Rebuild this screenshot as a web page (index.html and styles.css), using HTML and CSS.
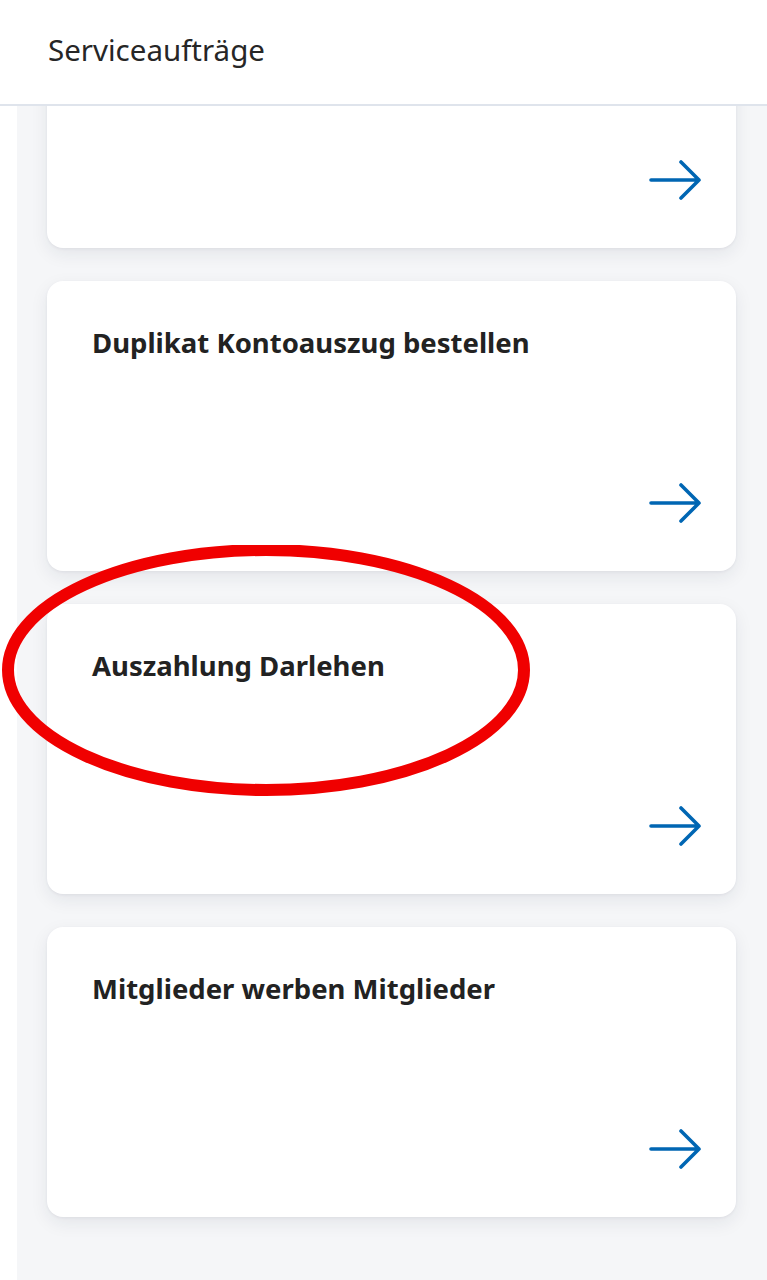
FILE: index.html
```
<!DOCTYPE html>
<html lang="de">
<head>
<meta charset="utf-8">
<link rel="stylesheet" href="styles.css">
</head>
<body>
<header class="top">
  <h1 class="top-title">Serviceaufträge</h1>
</header>
<div class="page">
  <main class="list">
    <a class="card card-first">
      <span class="card-title"></span>
      <svg class="arrow" viewBox="0 0 52 40"><path d="M2 20 H50 M32 2 L50 20 L32 38" fill="none" stroke="#0066b3" stroke-width="3.6" stroke-linecap="round" stroke-linejoin="round"/></svg>
    </a>
    <a class="card">
      <span class="card-title">Duplikat Kontoauszug bestellen</span>
      <svg class="arrow" viewBox="0 0 52 40"><path d="M2 20 H50 M32 2 L50 20 L32 38" fill="none" stroke="#0066b3" stroke-width="3.6" stroke-linecap="round" stroke-linejoin="round"/></svg>
    </a>
    <a class="card">
      <span class="card-title">Auszahlung Darlehen</span>
      <svg class="arrow" viewBox="0 0 52 40"><path d="M2 20 H50 M32 2 L50 20 L32 38" fill="none" stroke="#0066b3" stroke-width="3.6" stroke-linecap="round" stroke-linejoin="round"/></svg>
    </a>
    <a class="card">
      <span class="card-title">Mitglieder werben Mitglieder</span>
      <svg class="arrow" viewBox="0 0 52 40"><path d="M2 20 H50 M32 2 L50 20 L32 38" fill="none" stroke="#0066b3" stroke-width="3.6" stroke-linecap="round" stroke-linejoin="round"/></svg>
    </a>
  </main>
</div>
<svg class="mark" viewBox="0 0 540 260"><ellipse cx="266" cy="125" rx="258" ry="120" fill="none" stroke="#f00000" stroke-width="12"/></svg>
</body>
</html>
```
FILE: styles.css
```
html, body {
  margin: 0;
  padding: 0;
  background: #ffffff;
  width: 767px;
  height: 1280px;
  overflow: hidden;
}
body {
  font-family: "Noto Sans", "Open Sans", sans-serif;
  color: #222222;
  position: relative;
}
.top {
  height: 106px;
  background: #ffffff;
  border-bottom: 2px solid #dfe4ec;
  display: flex;
  align-items: center;
  padding-left: 48px;
  position: relative;
  z-index: 2;
  box-sizing: border-box;
}
.top-title {
  margin: 0 0 6px 0;
  font-weight: 400;
  font-size: 29.5px;
  color: #262626;
}
.page {
  margin-left: 17px;
  background: #f5f6f8;
  height: 1174px;
  overflow: hidden;
}
.list {
  display: flex;
  flex-direction: column;
  gap: 33px;
  padding: 0 31px 0 30px;
}
.card {
  height: 290px;
  background: #ffffff;
  border-radius: 16px;
  box-shadow: 0 6px 18px rgba(30, 40, 60, 0.08), 0 1px 3px rgba(30, 40, 60, 0.06);
  display: flex;
  flex-direction: column;
  justify-content: space-between;
  padding: 43px 35px 48px 45px;
  box-sizing: border-box;
}
.card-first {
  margin-top: -148px;
}
.card-title {
  font-weight: 700;
  font-size: 27.5px;
  color: #222222;
  line-height: 38px;
}
.arrow {
  width: 52px;
  height: 40px;
  align-self: flex-end;
}
.mark {
  position: absolute;
  left: 0;
  top: 545px;
  width: 540px;
  height: 260px;
  z-index: 3;
}
```
